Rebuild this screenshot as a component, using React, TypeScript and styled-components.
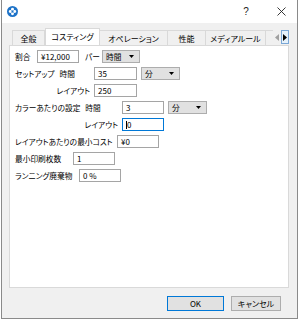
import React from "react";
import styled, { createGlobalStyle, css } from "styled-components";

const Global = createGlobalStyle`
  html, body { margin: 0; padding: 0; background: #ffffff; }
  body {
    font-family: "Noto Sans CJK JP", "Noto Sans", sans-serif;
    font-size: 7.7px;
    color: #000;
    font-feature-settings: "palt" 1;
  }
`;

const Window = styled.div`
  margin-left: 1px;
  width: 295px;
  height: 318px;
  border: 1px solid #8a8a8a;
  border-top: none;
  background: #f0f0f0;
  display: flex;
  flex-direction: column;
`;

const TitleBar = styled.div`
  height: 23px;
  background: #ffffff;
  display: flex;
  align-items: center;
  padding: 0 4px 0 5px;
  flex-shrink: 0;
`;

const TitleSpacer = styled.div`
  flex: 1;
`;

const TitleButton = styled.div`
  width: 24px;
  display: flex;
  justify-content: center;
  align-items: center;
  font-family: "Liberation Sans", sans-serif;
  font-size: 10px;
  color: #222;
  margin-left: 11px;
`;

const Body = styled.div`
  flex-shrink: 0;
  display: flex;
  flex-direction: column;
  padding: 0 8px 0 7px;
`;

const TabStrip = styled.div`
  position: relative;
  height: 22px;
  display: flex;
  align-items: flex-end;
  padding-left: 3px;
  overflow: hidden;
  flex-shrink: 0;
`;

const Tab = styled.div<{ $w: number; $active?: boolean }>`
  width: ${(p) => p.$w}px;
  flex-shrink: 0;
  height: 15px;
  box-sizing: border-box;
  border: 1px solid #d9d9d9;
  border-bottom: none;
  border-left: none;
  background: #f0f0f0;
  display: flex;
  align-items: center;
  justify-content: center;
  white-space: nowrap;
  font-size: 8px;
  ${(p) =>
    p.$active &&
    css`
      height: 18px;
      background: #ffffff;
      border-left: 1px solid #d9d9d9;
      margin-bottom: -1px;
      position: relative;
      z-index: 2;
      padding-bottom: 2px;
    `}
  &:first-child {
    border-left: 1px solid #d9d9d9;
  }
`;

const TabScroll = styled.div`
  position: absolute;
  right: 0;
  bottom: 1px;
  height: 14px;
  width: 16px;
  display: flex;
  background: #f0f0f0;
  z-index: 3;
`;

const ScrollBtn = styled.div<{ $on?: boolean }>`
  flex: 1;
  display: flex;
  align-items: center;
  justify-content: center;
  border: 1px solid ${(p) => (p.$on ? "#7aa7d6" : "#f0f0f0")};
  background: ${(p) => (p.$on ? "#e5f1fb" : "#f0f0f0")};
`;

const Panel = styled.div`
  height: 243px;
  flex-shrink: 0;
  box-sizing: border-box;
  background: #ffffff;
  border: 1px solid #d9d9d9;
  padding: 2px 0 0 5px;
  display: flex;
  flex-direction: column;
`;

const Row = styled.div`
  height: 17px;
  flex-shrink: 0;
  display: flex;
  align-items: center;
`;

const Label = styled.div<{ $w: number; $right?: boolean; $pl?: number }>`
  width: ${(p) => p.$w}px;
  flex-shrink: 0;
  box-sizing: border-box;
  white-space: nowrap;
  padding-right: ${(p) => (p.$right ? 4 : 0)}px;
  padding-left: ${(p) => p.$pl ?? 0}px;
  display: flex;
  justify-content: ${(p) => (p.$right ? "flex-end" : "flex-start")};
`;

const Gap = styled.span<{ $w: number }>`
  display: inline-block;
  width: ${(p) => p.$w}px;
`;

const Input = styled.div<{ $w: number; $focus?: boolean }>`
  width: ${(p) => p.$w}px;
  height: 13px;
  flex-shrink: 0;
  box-sizing: border-box;
  border: 1px solid ${(p) => (p.$focus ? "#0078d7" : "#a5a5a5")};
  background: #fff;
  padding-left: 3px;
  display: flex;
  align-items: center;
  white-space: nowrap;
  font-size: 8px;
`;

const Caret = styled.span`
  display: inline-block;
  width: 1px;
  height: 8px;
  background: #000;
`;

const Select = styled.div<{ $w: number; $ml?: number }>`
  width: ${(p) => p.$w}px;
  height: 13px;
  flex-shrink: 0;
  margin-left: ${(p) => p.$ml ?? 0}px;
  box-sizing: border-box;
  border: 1px solid #adadad;
  background: #e1e1e1;
  padding: 0 5px 0 3px;
  display: flex;
  align-items: center;
  justify-content: space-between;
  white-space: nowrap;
`;

const Footer = styled.div`
  flex: 1;
  display: flex;
  justify-content: flex-end;
  align-items: flex-start;
  padding: 8px 16px 0 0;
  gap: 7px;
`;

const Button = styled.div<{ $w: number; $default?: boolean }>`
  width: ${(p) => p.$w}px;
  height: 15px;
  box-sizing: border-box;
  border: 1px solid ${(p) => (p.$default ? "#0078d7" : "#adadad")};
  background: #e1e1e1;
  display: flex;
  align-items: center;
  justify-content: center;
  font-size: 8px;
`;

const AppIcon = () => (
  <svg width="11" height="11" viewBox="0 0 12 12">
    <circle cx="6" cy="6" r="6" fill="#1e73c8" />
    <circle cx="6" cy="3.6" r="1.6" fill="#fff" />
    <circle cx="6" cy="8.4" r="1.6" fill="#fff" />
    <circle cx="3.6" cy="6" r="1.6" fill="#fff" />
    <circle cx="8.4" cy="6" r="1.6" fill="#fff" />
    <circle cx="6" cy="6" r="1" fill="#1e73c8" />
  </svg>
);

const CloseIcon = () => (
  <svg width="9" height="9" viewBox="0 0 9 9">
    <path d="M0.5 0.5 L8.5 8.5 M8.5 0.5 L0.5 8.5" stroke="#222" strokeWidth="0.9" />
  </svg>
);

const Arrow = ({ dir, color }: { dir: "l" | "r"; color: string }) => (
  <svg width="4" height="7" viewBox="0 0 4 7">
    {dir === "l" ? (
      <path d="M4 0 L0 3.5 L4 7 Z" fill={color} />
    ) : (
      <path d="M0 0 L4 3.5 L0 7 Z" fill={color} />
    )}
  </svg>
);

const DropArrow = () => (
  <svg width="5" height="3" viewBox="0 0 5 3">
    <path d="M0 0 L5 0 L2.5 3 Z" fill="#000" />
  </svg>
);

export default function App() {
  return (
    <>
      <Global />
      <Window>
        <TitleBar>
          <AppIcon />
          <TitleSpacer />
          <TitleButton>?</TitleButton>
          <TitleButton>
            <CloseIcon />
          </TitleButton>
        </TitleBar>
        <Body>
          <TabStrip>
            <Tab $w={33}>全般</Tab>
            <Tab $w={55} $active>
              コスティング
            </Tab>
            <Tab $w={68}>オペレーション</Tab>
            <Tab $w={38}>性能</Tab>
            <Tab $w={60}>メディアルール</Tab>
            <Tab $w={40}>色設定</Tab>
            <TabScroll>
              <ScrollBtn>
                <Arrow dir="l" color="#a0a0a0" />
              </ScrollBtn>
              <ScrollBtn $on>
                <Arrow dir="r" color="#000" />
              </ScrollBtn>
            </TabScroll>
          </TabStrip>
          <Panel>
            <Row>
              <Label $w={22}>割合</Label>
              <Input $w={42}>¥12,000</Input>
              <Label $w={23} $pl={6}>
                パー
              </Label>
              <Select $w={38}>
                <span>時間</span>
                <DropArrow />
              </Select>
            </Row>
            <Row>
              <Label $w={79}>
                セットアップ<Gap $w={5} />時間
              </Label>
              <Input $w={43}>35</Input>
              <Select $w={39} $ml={4}>
                <span>分</span>
                <DropArrow />
              </Select>
            </Row>
            <Row>
              <Label $w={79} $right>
                レイアウト
              </Label>
              <Input $w={43}>250</Input>
            </Row>
            <Row>
              <Label $w={107}>
                カラーあたりの設定<Gap $w={5} />時間
              </Label>
              <Input $w={42}>3</Input>
              <Select $w={39} $ml={4}>
                <span>分</span>
                <DropArrow />
              </Select>
            </Row>
            <Row>
              <Label $w={107} $right>
                レイアウト
              </Label>
              <Input $w={42} $focus>
                <Caret />0
              </Input>
            </Row>
            <Row>
              <Label $w={102}>レイアウトあたりの最小コスト</Label>
              <Input $w={42}>¥0</Input>
            </Row>
            <Row>
              <Label $w={58}>最小印刷枚数</Label>
              <Input $w={42}>1</Input>
            </Row>
            <Row>
              <Label $w={64}>ランニング廃棄物</Label>
              <Input $w={42}>0 %</Input>
            </Row>
          </Panel>
        </Body>
        <Footer>
          <Button $w={57} $default>
            OK
          </Button>
          <Button $w={50}>キャンセル</Button>
        </Footer>
      </Window>
    </>
  );
}
